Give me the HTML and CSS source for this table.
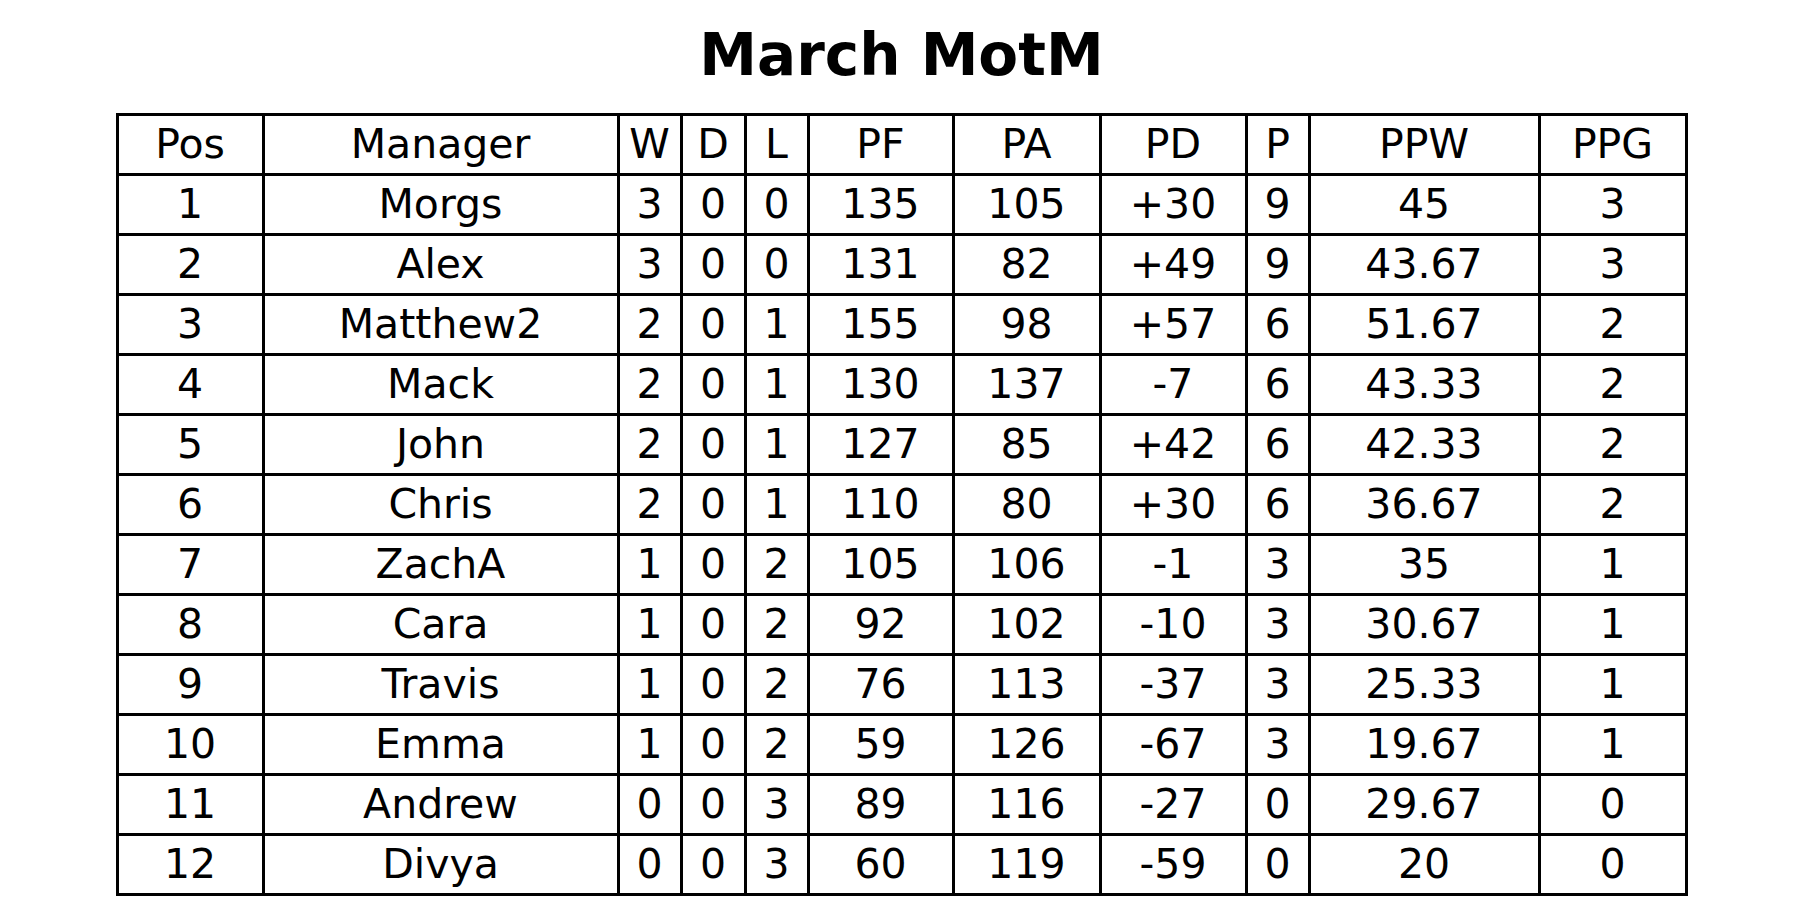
FILE: index.html
```html
<!DOCTYPE html>
<html lang="en">
<head>
<meta charset="utf-8">
<title>March MotM</title>
<link rel="stylesheet" href="styles.css">
</head>
<body>
<main class="page">
  <h1 class="title">March MotM</h1>
  <table class="standings">
    <colgroup>
      <col class="c-pos"><col class="c-manager"><col class="c-w"><col class="c-d"><col class="c-l">
      <col class="c-pf"><col class="c-pa"><col class="c-pd"><col class="c-p"><col class="c-ppw"><col class="c-ppg">
    </colgroup>
    <thead>
      <tr><th>Pos</th><th>Manager</th><th>W</th><th>D</th><th>L</th><th>PF</th><th>PA</th><th>PD</th><th>P</th><th>PPW</th><th>PPG</th></tr>
    </thead>
    <tbody>
      <tr><td>1</td><td>Morgs</td><td>3</td><td>0</td><td>0</td><td>135</td><td>105</td><td>+30</td><td>9</td><td>45</td><td>3</td></tr>
      <tr><td>2</td><td>Alex</td><td>3</td><td>0</td><td>0</td><td>131</td><td>82</td><td>+49</td><td>9</td><td>43.67</td><td>3</td></tr>
      <tr><td>3</td><td>Matthew2</td><td>2</td><td>0</td><td>1</td><td>155</td><td>98</td><td>+57</td><td>6</td><td>51.67</td><td>2</td></tr>
      <tr><td>4</td><td>Mack</td><td>2</td><td>0</td><td>1</td><td>130</td><td>137</td><td>-7</td><td>6</td><td>43.33</td><td>2</td></tr>
      <tr><td>5</td><td>John</td><td>2</td><td>0</td><td>1</td><td>127</td><td>85</td><td>+42</td><td>6</td><td>42.33</td><td>2</td></tr>
      <tr><td>6</td><td>Chris</td><td>2</td><td>0</td><td>1</td><td>110</td><td>80</td><td>+30</td><td>6</td><td>36.67</td><td>2</td></tr>
      <tr><td>7</td><td>ZachA</td><td>1</td><td>0</td><td>2</td><td>105</td><td>106</td><td>-1</td><td>3</td><td>35</td><td>1</td></tr>
      <tr><td>8</td><td>Cara</td><td>1</td><td>0</td><td>2</td><td>92</td><td>102</td><td>-10</td><td>3</td><td>30.67</td><td>1</td></tr>
      <tr><td>9</td><td>Travis</td><td>1</td><td>0</td><td>2</td><td>76</td><td>113</td><td>-37</td><td>3</td><td>25.33</td><td>1</td></tr>
      <tr><td>10</td><td>Emma</td><td>1</td><td>0</td><td>2</td><td>59</td><td>126</td><td>-67</td><td>3</td><td>19.67</td><td>1</td></tr>
      <tr><td>11</td><td>Andrew</td><td>0</td><td>0</td><td>3</td><td>89</td><td>116</td><td>-27</td><td>0</td><td>29.67</td><td>0</td></tr>
      <tr><td>12</td><td>Divya</td><td>0</td><td>0</td><td>3</td><td>60</td><td>119</td><td>-59</td><td>0</td><td>20</td><td>0</td></tr>
    </tbody>
  </table>
</main>
</body>
</html>
```

FILE: styles.css
```css
html, body {
  margin: 0;
  padding: 0;
  background: #ffffff;
}

body {
  font-family: "DejaVu Sans", "Liberation Sans", sans-serif;
  color: #000000;
}

.page {
  display: flex;
  flex-direction: column;
  align-items: center;
  padding-top: 20px;
}

.title {
  margin: 0 0 22px 0;
  font-size: 58px;
  font-weight: bold;
  line-height: 71px;
  text-align: center;
}

.standings {
  table-layout: fixed;
  border-collapse: separate;
  border-spacing: 3px;
  background: #000000;
  width: 1572px;
}

.c-pos { width: 143px; }
.c-manager { width: 352px; }
.c-w { width: 60px; }
.c-d { width: 61px; }
.c-l { width: 60px; }
.c-pf { width: 142px; }
.c-pa { width: 144px; }
.c-pd { width: 143px; }
.c-p { width: 60px; }
.c-ppw { width: 227px; }
.c-ppg { width: 144px; }

.standings th,
.standings td {
  background: #ffffff;
  height: 57px;
  padding: 0 0 2px 0;
  box-sizing: border-box;
  font-size: 41px;
  font-weight: normal;
  text-align: center;
  vertical-align: middle;
  white-space: nowrap;
  overflow: hidden;
}
```
